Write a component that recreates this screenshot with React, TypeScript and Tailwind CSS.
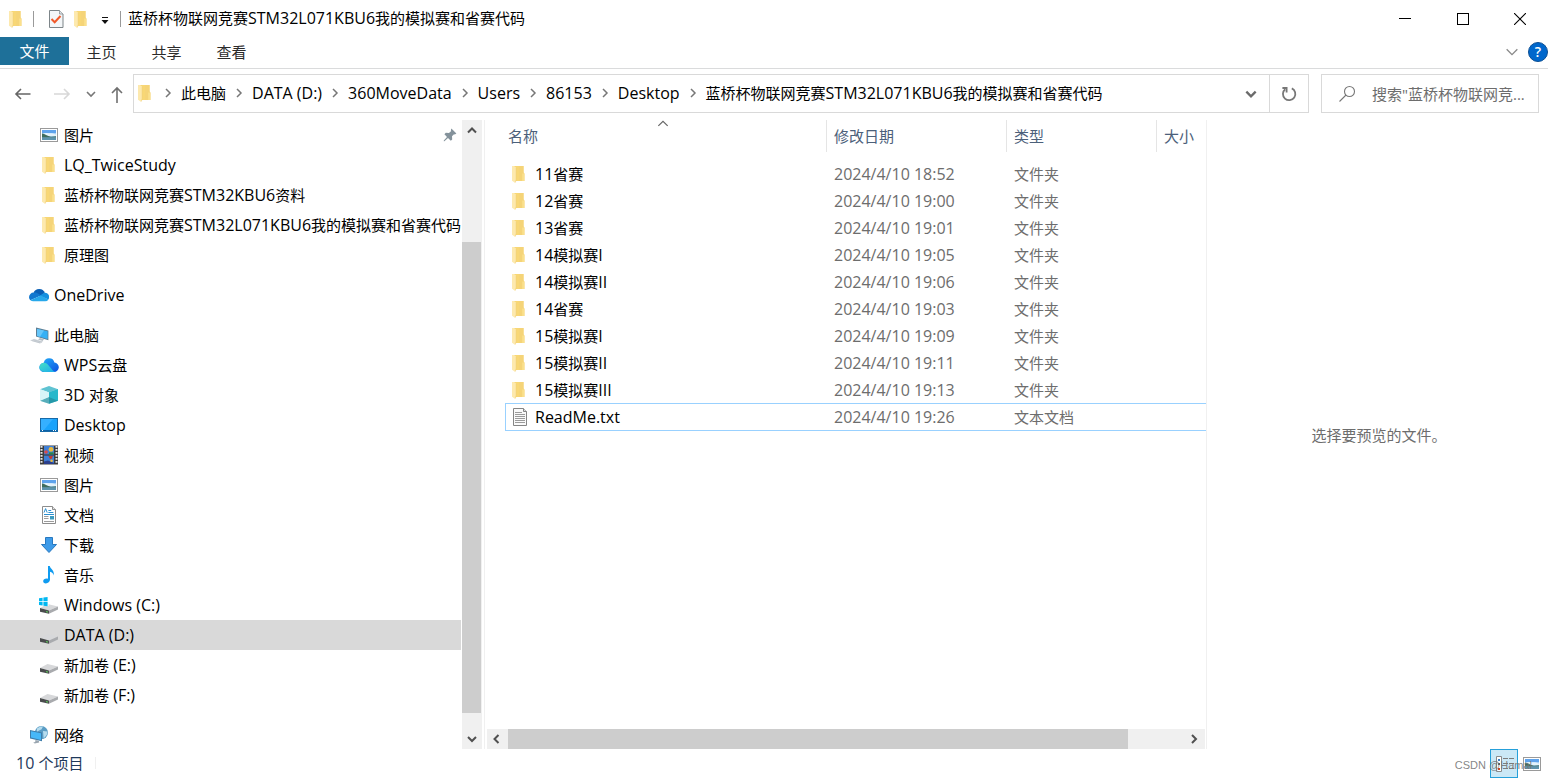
import React, { useState } from 'react';

const FOLDER_NAME = '蓝桥杯物联网竞赛STM32L071KBU6我的模拟赛和省赛代码';

type IconProps = { className?: string };

// Latin runs are set one step larger than the CJK glyphs around them
function Label({ text }: { text: string }) {
  const parts = text.split(/([\x20-\x7e]+)/).filter(Boolean);
  return (
    <span className="whitespace-pre">
      {parts.map((part, i) =>
        /^[\x20-\x7e]/.test(part) ? (
          <span key={i} className="text-[16px]">{part}</span>
        ) : (
          <span key={i}>{part}</span>
        )
      )}
    </span>
  );
}

function FolderIcon({ className = 'w-5 h-5' }: IconProps) {
  return (
    <svg viewBox="0 0 20 20" className={className}>
      <path d="M5 2h9.5v6.5l.8 1V17H5z" fill="#f8d775" />
      <path d="M10 2h4.5v6.5l.8 1V17H10z" fill="#f5d478" />
      <path d="M13.2 9.5h2.1V17h-2.1z" fill="#fbe08c" />
      <path d="M3 2H5l2.2 1.6v12.2L6 18.8 3 16.8z" fill="#fde9ae" />
      <path d="M7.2 3.6v12.2l-1 2.8" fill="none" stroke="#efcb6c" strokeWidth=".6" />
    </svg>
  );
}

function PictureIcon({ className = 'w-5 h-5' }: IconProps) {
  return (
    <svg viewBox="0 0 20 20" className={className}>
      <rect x="1.5" y="3.5" width="17" height="13" fill="#fff" stroke="#9a9a9a" />
      <path d="M3 5h14v10H3z" fill="#a9d3f7" />
      <path d="M3 5h14v3H3z" fill="#5fa3ec" />
      <path d="M5 8.4c3-1.2 5 .4 8-.2l4 1.4V11H3V9z" fill="#e4f2fb" />
      <path d="M3 8.6c3 .4 5 2.6 9 3.2l5-.6v1.6H3z" fill="#3f6d5d" />
      <path d="M3 12.4h14V15H3z" fill="#5d93ad" />
    </svg>
  );
}

function OneDriveIcon() {
  return (
    <svg viewBox="0 0 20 20" className="w-5 h-5">
      <path d="M4.6 7.6A6 6 0 0 1 15.8 8L11 11.5z" fill="#0a5fb5" />
      <path d="M0 12.2A4.7 4.7 0 0 1 4.6 7.6c1.8-.3 3.4.3 4.8 1.2L12 10.6 1.4 15.2A4.6 4.6 0 0 1 0 12.2z" fill="#1177cf" />
      <path d="M11 10.4l4.4-2.6A4.2 4.2 0 0 1 19.4 14.4L11 11z" fill="#1490df" />
      <path d="M1.4 15.2L11.8 10.4l7.6 4a3.6 3.6 0 0 1-3.2 1.9H4.4a4.2 4.2 0 0 1-3-1.1z" fill="#28a8ea" />
    </svg>
  );
}

function ComputerIcon() {
  return (
    <svg viewBox="0 0 20 20" className="w-5 h-5">
      <path d="M7 2.6l12.4 2.8v9.8L7 11.6z" fill="#5d7e94" />
      <path d="M8 4l10.6 2.3v7.6L8 10.9z" fill="#35b0f5" />
      <path d="M8 4l7 1.5-4 6.2-3-.8z" fill="#66c6fa" />
      <path d="M11 13l4 1.2-1.4 1.8L9 14.6z" fill="#b3bcc4" />
      <path d="M1 15.4l4-1.6 9.4 2.8-3.4 2z" fill="#d6dbe0" />
      <path d="M2.6 15.5l8.6 2.4M4.4 14.8l8.6 2.4" stroke="#aab2ba" strokeWidth=".5" />
    </svg>
  );
}

function WpsCloudIcon() {
  return (
    <svg viewBox="0 0 20 20" className="w-5 h-5">
      <defs>
        <linearGradient id="wpsA" x1="0" y1="0" x2="1" y2="1">
          <stop offset="0" stopColor="#45e0c4" />
          <stop offset="1" stopColor="#1ba9ef" />
        </linearGradient>
        <linearGradient id="wpsB" x1="0" y1="0" x2="1" y2="1">
          <stop offset="0" stopColor="#24b2fa" />
          <stop offset="1" stopColor="#0b4fe0" />
        </linearGradient>
      </defs>
      <path d="M5 17a4.6 4.6 0 0 1-.2-9.2 5.4 5.4 0 0 1 10.6-.2A4.7 4.7 0 0 1 14.8 17z" fill="url(#wpsB)" />
      <path d="M5.2 17a4.6 4.6 0 1 1 3.6-7.4L12.6 14c1 1.2 2.2 3 4 2.8a9 9 0 0 1-1.8.2z" fill="url(#wpsA)" />
    </svg>
  );
}

function CubeIcon() {
  return (
    <svg viewBox="0 0 20 20" className="w-5 h-5">
      <path d="M10 1l9 3.2-9 3.2-9-3.2z" fill="#5fc3d2" />
      <path d="M1 4.2l9 3.2v11.4L1 15.8z" fill="#bfeaf0" />
      <path d="M19 4.2l-9 3.2v11.4l9-3z" fill="#19a6ba" />
      <path d="M1 15.8l9-4 9 4-9 3z" fill="#2b93a3" opacity=".7" />
      <path d="M1 4.2l9 3.2V12l-9 3.8z" fill="#d8f4f7" />
      <path d="M19 4.2l-9 3.2V12l9 3.8z" fill="#27b8cb" />
    </svg>
  );
}

function DesktopIcon() {
  return (
    <svg viewBox="0 0 20 20" className="w-5 h-5">
      <rect x="1.5" y="3.5" width="17" height="13" fill="#19a3fb" stroke="#176aa8" />
      <path d="M2 4h12L5 15H2z" fill="#35b0ff" />
      <path d="M2 15h16v1H2z" fill="#0b62a8" />
      <path d="M3 15.5h1M14 15.5h1M16 15.5h1" stroke="#fff" />
    </svg>
  );
}

function VideoIcon() {
  return (
    <svg viewBox="0 0 20 20" className="w-5 h-5">
      <rect x="1" y="0.5" width="18" height="19" fill="#3c3c3c" />
      <path d="M2.5 1v18M17.5 1v18" stroke="#e6e6e6" strokeWidth="2" strokeDasharray="1.8 1.2" />
      <rect x="5" y="1" width="10" height="8.4" fill="#3f7fd6" />
      <rect x="5" y="10.6" width="10" height="8.4" fill="#3f7fd6" />
      <circle cx="12" cy="4.4" r="2.4" fill="#e9b93c" />
      <circle cx="7" cy="7" r="1.8" fill="#d94b4b" />
      <path d="M10 7.4h4.6v2H10z" fill="#2a8a47" />
      <path d="M9.4 11h4.6l-1.6 3h-1.4z" fill="#c63a2f" />
      <path d="M5 16.4l4-1 6 2.6v1H5z" fill="#2b3f8c" />
      <circle cx="12.6" cy="15.8" r="1.3" fill="#e9b93c" />
    </svg>
  );
}

function DocumentIcon() {
  return (
    <svg viewBox="0 0 20 20" className="w-5 h-5">
      <path d="M3.5 1.5h10l3 3v14h-13z" fill="#fff" stroke="#8d8d8d" />
      <path d="M13.5 1.5v3h3" fill="#e3e3e3" stroke="#8d8d8d" />
      <path d="M5 7.6l1.6-4 1.6 4M9.4 5.5h2.8M9.4 7.5h5M5 9.5h10" stroke="#2b8fd0" fill="none" />
      <path d="M5 11.5h4.5M5 13.5h4.5M5 16.5h10" stroke="#9c9c9c" />
      <path d="M11 11h4v3.5h-4z" fill="#3a9abf" />
    </svg>
  );
}

function DownloadIcon() {
  return (
    <svg viewBox="0 0 20 20" className="w-5 h-5">
      <path d="M6.5 2.5h7v7h4L10 17.5 2.5 9.5h4z" fill="#3e9be9" stroke="#2878bf" />
    </svg>
  );
}

function MusicIcon() {
  return (
    <svg viewBox="0 0 20 20" className="w-5 h-5">
      <path d="M9 1h1.8c.4 3 4.8 4 4 9.4-.6-2-1.8-3.2-3.8-3.6v7.8c0 2.4-2 3.8-4.2 3.8-1.6 0-2.6-.8-2.6-2.2 0-2 2.4-3.2 4.8-2.4z" fill="#0f9bf0" />
    </svg>
  );
}

function DriveIcon({ windows = false }: { windows?: boolean }) {
  return (
    <svg viewBox="0 0 20 20" className="w-5 h-5">
      <path d="M1 13l7.5-4L19 11.6 10 15.6z" fill="#d7d8da" />
      <path d="M1 13l9 2.4v3.4l-9-2z" fill="#4a4c4d" />
      <path d="M10 15.4l9-3.8v2.8l-9 4.4z" fill="#a9abae" />
      <path d="M7 16.6l2 .5" stroke="#5fd35a" />
      {windows && (
        <>
          <path d="M0 2h9.5v9H0z" fill="#fff" />
          <path d="M0 3.2l3.6-.5v3.6H0zM4.4 2.6L8.6 2v4.3H4.4zM0 7.1h3.6v3.5L0 10.1zM4.4 7.1h4.2v4.1l-4.2-.5z" fill="#00b7f1" />
        </>
      )}
    </svg>
  );
}

function NetworkIcon() {
  return (
    <svg viewBox="0 0 20 20" className="w-5 h-5">
      <circle cx="12.4" cy="7.6" r="6.6" fill="#5a9cc4" />
      <path d="M8 3.6c2-2 4.6-2.4 6-2l-1.4 2.6-3 1.6-2 2zM14 6l4.4.6c.4 2.8-1.8 5.6-3.8 6.6z" fill="#b6dcee" />
      <path d="M1 5l12 2.4v8.8L1 13.4z" fill="#3e7daa" />
      <path d="M2 6.2l10 2v6.8L2 12.6z" fill="#46b8f8" />
      <path d="M6.4 15l3.4.8.4 1.6-4.4 1-1.6-.8 2-.6z" fill="#9aa6b0" />
    </svg>
  );
}

function TextFileIcon() {
  return (
    <svg viewBox="0 0 20 20" className="w-5 h-5">
      <path d="M3.5 1.5h10l3 3v14h-13z" fill="#fafafa" stroke="#858585" />
      <path d="M13.5 1.5v3h3" fill="#ddd" stroke="#858585" />
      <path d="M5 5.5h7M5 7.5h10M5 9.5h10M5 11.5h10M5 13.5h10M5 15.5h10" stroke="#9b9b9b" />
    </svg>
  );
}

function CheckPageIcon() {
  return (
    <svg viewBox="0 0 20 20" className="w-5 h-5">
      <path d="M3.5 1.5h10l3.5 3.5v13.5H3.5z" fill="#f3f6f8" stroke="#7d8589" />
      <path d="M13.5 1.5V5H17" fill="#dfe3e6" stroke="#7d8589" strokeWidth=".7" />
      <path d="M5.5 10l3.2 3.2 5.8-6.2" fill="none" stroke="#f0592a" strokeWidth="2" />
    </svg>
  );
}

function PinIcon() {
  return (
    <svg viewBox="0 0 14 14" className="w-[14px] h-[14px]">
      <path d="M8.4.6l5 5-1.6.8-.8-.2-2 2 .2 3.2-1.4 1.4L5 10 1.4 13.2H.8v-.6L4 9 1.4 6.2 2.8 4.8l3.2.2 2.2-2-.4-.8z" fill="#84929b" />
    </svg>
  );
}

type Dir = 'up' | 'down' | 'left' | 'right';
const CHEVRONS: Record<Dir, string> = {
  up: 'M2 8.5L6 4.5l4 4',
  down: 'M2 4L6 8l4-4',
  left: 'M8.5 2L4.5 6l4 4',
  right: 'M4 2l4 4-4 4',
};

function Chevron({ dir, width = 1.5, className = 'w-3 h-3' }: { dir: Dir; width?: number; className?: string }) {
  return (
    <svg viewBox="0 0 12 12" className={className} fill="none" stroke="currentColor" strokeWidth={width}>
      <path d={CHEVRONS[dir]} />
    </svg>
  );
}

function Arrow({ d }: { d: string }) {
  return (
    <svg viewBox="0 0 18 18" className="w-[18px] h-[18px]" fill="none" stroke="currentColor" strokeWidth="1.6">
      <path d={d} />
    </svg>
  );
}

interface TreeItem {
  label: string;
  icon: React.ReactNode;
  pinned?: boolean;
}

interface TreeGroup {
  root?: TreeItem;
  items: TreeItem[];
}

const TREE: TreeGroup[] = [
  {
    items: [
      { label: '图片', icon: <PictureIcon />, pinned: true },
      { label: 'LQ_TwiceStudy', icon: <FolderIcon /> },
      { label: '蓝桥杯物联网竞赛STM32KBU6资料', icon: <FolderIcon /> },
      { label: FOLDER_NAME, icon: <FolderIcon /> },
      { label: '原理图', icon: <FolderIcon /> },
    ],
  },
  { root: { label: 'OneDrive', icon: <OneDriveIcon /> }, items: [] },
  {
    root: { label: '此电脑', icon: <ComputerIcon /> },
    items: [
      { label: 'WPS云盘', icon: <WpsCloudIcon /> },
      { label: '3D 对象', icon: <CubeIcon /> },
      { label: 'Desktop', icon: <DesktopIcon /> },
      { label: '视频', icon: <VideoIcon /> },
      { label: '图片', icon: <PictureIcon /> },
      { label: '文档', icon: <DocumentIcon /> },
      { label: '下载', icon: <DownloadIcon /> },
      { label: '音乐', icon: <MusicIcon /> },
      { label: 'Windows (C:)', icon: <DriveIcon windows /> },
      { label: 'DATA (D:)', icon: <DriveIcon /> },
      { label: '新加卷 (E:)', icon: <DriveIcon /> },
      { label: '新加卷 (F:)', icon: <DriveIcon /> },
    ],
  },
  { root: { label: '网络', icon: <NetworkIcon /> }, items: [] },
];

const FILES = [
  { name: '11省赛', date: '2024/4/10 18:52', type: '文件夹' },
  { name: '12省赛', date: '2024/4/10 19:00', type: '文件夹' },
  { name: '13省赛', date: '2024/4/10 19:01', type: '文件夹' },
  { name: '14模拟赛I', date: '2024/4/10 19:05', type: '文件夹' },
  { name: '14模拟赛II', date: '2024/4/10 19:06', type: '文件夹' },
  { name: '14省赛', date: '2024/4/10 19:03', type: '文件夹' },
  { name: '15模拟赛I', date: '2024/4/10 19:09', type: '文件夹' },
  { name: '15模拟赛II', date: '2024/4/10 19:11', type: '文件夹' },
  { name: '15模拟赛III', date: '2024/4/10 19:13', type: '文件夹' },
  { name: 'ReadMe.txt', date: '2024/4/10 19:26', type: '文本文档' },
];

const CRUMBS = ['此电脑', 'DATA (D:)', '360MoveData', 'Users', '86153', 'Desktop', FOLDER_NAME];

function TitleBar() {
  return (
    <header className="flex h-[37px] items-center">
      <FolderIcon className="ml-[6px] w-5 h-5 shrink-0" />
      <span className="ml-[7px] h-4 w-px bg-[#9a9a9a]" />
      <button aria-label="属性" className="ml-3"><CheckPageIcon /></button>
      <button aria-label="新建文件夹" className="ml-[5px]"><FolderIcon /></button>
      <button aria-label="自定义快速访问工具栏" className="ml-1 flex w-5 justify-center">
        <svg viewBox="0 0 8 8" className="mt-1 w-2 h-2">
          <path d="M1 .5h6" stroke="#111" />
          <path d="M.5 3h7L4 7z" fill="#111" />
        </svg>
      </button>
      <span className="ml-[5px] h-4 w-px bg-[#9a9a9a]" />
      <h1 className="ml-[7px] pb-[2px]"><Label text={FOLDER_NAME} /></h1>
      <div className="ml-auto flex text-black">
        <button aria-label="最小化" className="flex h-9 w-[58px] items-center justify-center">
          <span className="h-px w-3 bg-black" />
        </button>
        <button aria-label="最大化" className="flex h-9 w-[58px] items-center justify-center">
          <span className="h-3 w-3 border border-black" />
        </button>
        <button aria-label="关闭" className="flex h-9 w-14 items-center justify-center">
          <svg viewBox="0 0 12 12" className="w-3 h-3" stroke="#000" strokeWidth="1.1">
            <path d="M0 0l12 12M12 0L0 12" />
          </svg>
        </button>
      </div>
    </header>
  );
}

function RibbonTabs() {
  return (
    <nav className="flex h-8 items-start border-b border-[#dadbdc]">
      <button className="h-7 w-[69px] bg-[#1e7099] text-white">文件</button>
      {['主页', '共享', '查看'].map((tab) => (
        <button key={tab} className="h-[30px] w-[65px] text-[#2b2b2b]">{tab}</button>
      ))}
      <div className="ml-auto flex h-[30px] items-center gap-2">
        <button aria-label="展开功能区" className="text-[#8a8a8a]">
          <Chevron dir="down" width={1} className="w-4 h-4" />
        </button>
        <button aria-label="帮助" className="flex h-5 w-5 items-center justify-center rounded-full border border-[#0c4f93] bg-[#0067cc] text-sm font-semibold text-white">?</button>
      </div>
    </nav>
  );
}

function AddressBar() {
  return (
    <div className="flex items-center pt-[5px] pb-[7px] pr-[9px]">
      <button aria-label="返回" className="ml-[14px] text-[#666]"><Arrow d="M16.5 9H2M7 4L2 9l5 5" /></button>
      <button aria-label="前进" className="ml-[21px] text-[#d8d8d8]"><Arrow d="M1 9h15M11 4l5 5-5 5" /></button>
      <button aria-label="最近的位置" className="ml-[14px] text-[#777]"><Chevron dir="down" width={1.6} /></button>
      <button aria-label="上移" className="ml-[11px] pt-[2px] text-[#707070]"><Arrow d="M9 17V2M4 7l5-5 5 5" /></button>
      <div className="ml-[7px] flex h-[39px] flex-1 items-stretch border border-[#d9d9d9]">
        <div className="flex min-w-0 flex-1 items-center overflow-hidden pb-[2px]">
          <FolderIcon className="ml-px w-5 h-5 shrink-0" />
          {CRUMBS.map((crumb) => (
            <React.Fragment key={crumb}>
              <span className="flex w-[26px] shrink-0 justify-center text-[#777]">
                <Chevron dir="right" />
              </span>
              <button className="shrink-0"><Label text={crumb} /></button>
            </React.Fragment>
          ))}
        </div>
        <button aria-label="以前的位置" className="flex w-9 items-center justify-center text-[#6a6a6a]">
          <Chevron dir="down" width={2} className="w-[14px] h-[14px]" />
        </button>
        <button aria-label="刷新" className="flex w-[39px] items-center justify-center border-l border-[#d9d9d9]">
          <svg viewBox="0 0 16 16" className="w-4 h-4" fill="none" stroke="#777" strokeWidth="1.8">
            <path d="M10.8 2.4a6.2 6.2 0 1 1-6.6.8" />
            <path d="M1.4 2h4.2v4.4" />
          </svg>
        </button>
      </div>
      <label className="ml-3 flex h-[39px] w-[218px] items-center border border-[#d9d9d9] pl-4">
        <svg viewBox="0 0 18 18" className="w-[18px] h-[18px] shrink-0" fill="none" stroke="#777" strokeWidth="1.1">
          <circle cx="11.5" cy="6.5" r="5" />
          <path d="M8 10l-6.5 6.5" />
        </svg>
        <input
          type="search"
          aria-label="搜索"
          placeholder={'搜索"蓝桥杯物联网竞...'}
          className="ml-4 min-w-0 flex-1 bg-transparent outline-none placeholder:text-[#6d6d6d]"
        />
      </label>
    </div>
  );
}

function TreeRow({ item, nested, selected, onSelect }: {
  item: TreeItem;
  nested: boolean;
  selected: boolean;
  onSelect: () => void;
}) {
  return (
    <button
      onClick={onSelect}
      className={`flex h-[30px] w-full items-center gap-[5px] overflow-hidden pr-1 text-left ${nested ? 'pl-[39px]' : 'pl-[29px]'} ${selected ? 'bg-[#d9d9d9]' : ''}`}
    >
      <span className="shrink-0">{item.icon}</span>
      <Label text={item.label} />
      {item.pinned && <span className="ml-auto"><PinIcon /></span>}
    </button>
  );
}

function Sidebar() {
  const [selected, setSelected] = useState('DATA (D:)');
  return (
    <aside className="flex w-[485px] shrink-0 border-r border-[#f0f0f0]">
      <div className="-mb-px flex w-[461px] flex-col gap-[10px]">
        {TREE.map((group, i) => (
          <div key={i}>
            {[group.root, ...group.items].map((item, j) =>
              item ? (
                <TreeRow
                  key={j}
                  item={item}
                  nested={item !== group.root}
                  selected={item.label === selected}
                  onSelect={() => setSelected(item.label)}
                />
              ) : null
            )}
          </div>
        ))}
      </div>
      <div className="ml-px flex w-5 flex-col items-center bg-[#f0f0f0] text-[#505050]">
        <button aria-label="向上滚动" className="flex h-5 items-center"><Chevron dir="up" width={2} /></button>
        <div className="mt-[102px] mr-px w-[19px] flex-1 bg-[#cdcdcd]" />
        <button aria-label="向下滚动" className="mt-4 flex h-5 items-center"><Chevron dir="down" width={2} /></button>
      </div>
    </aside>
  );
}

function FileList() {
  return (
    <section className="flex min-w-0 flex-1 flex-col border-r border-[#f0f0f0]">
      <div className="flex-1 pl-5">
        <table className="w-full table-fixed border-separate border-spacing-0 text-left">
          <colgroup>
            <col />
            <col className="w-[180px]" />
            <col className="w-[150px]" />
            <col className="w-[50px]" />
          </colgroup>
          <thead>
            <tr className="h-10 align-top text-[#4c607a]">
              <th scope="col" className="p-0 font-normal">
                <div className="relative flex h-8 items-center pl-[3px]">
                  名称
                  <Chevron dir="up" width={1} className="absolute left-[151px] -top-1 w-[14px] h-[14px] text-[#666]" />
                </div>
              </th>
              {['修改日期', '类型', '大小'].map((head) => (
                <th key={head} scope="col" className="p-0 font-normal">
                  <div className="flex h-8 items-center border-l border-[#e5e5e5] pl-[7px]">{head}</div>
                </th>
              ))}
            </tr>
          </thead>
          <tbody className="text-[#6d6d6d]">
            {FILES.map((file) => {
              const isText = file.name.endsWith('.txt');
              const edge = isText ? 'border-y border-[#99d1ff]' : '';
              return (
                <tr key={file.name} className={isText ? 'h-7' : 'h-[27px]'}>
                  <td className={`p-0 ${edge} ${isText ? 'border-l' : ''}`}>
                    <div className={`flex items-center text-black ${isText ? 'gap-[5px] pl-1' : 'gap-[6px] pl-1'}`}>
                      {isText ? <TextFileIcon /> : <FolderIcon />}
                      <Label text={file.name} />
                    </div>
                  </td>
                  <td className={`py-0 pr-0 pl-2 ${edge}`}><Label text={file.date} /></td>
                  <td className={`py-0 pr-0 pl-2 ${edge}`}>{file.type}</td>
                  <td className={`p-0 ${edge}`} />
                </tr>
              );
            })}
          </tbody>
        </table>
      </div>
      <div className="mr-px ml-[2px] flex h-5 items-center bg-[#f0f0f0] text-[#505050]">
        <button aria-label="向左滚动" className="flex w-[21px] justify-center pr-[3px]"><Chevron dir="left" width={2} /></button>
        <div className="h-full flex-1 bg-[#cdcdcd]" />
        <button aria-label="向右滚动" className="ml-[56px] flex w-[21px] justify-center pr-[2px]"><Chevron dir="right" width={2} /></button>
      </div>
    </section>
  );
}

function StatusBar() {
  return (
    <footer className="relative flex h-[30px] items-start pr-[6px] pl-4 text-[#1e395b]">
      <div className="flex h-7 items-center">
        <Label text="10 个项目" />
        <span className="ml-3 h-3 w-px bg-[#f0f0f0]" />
      </div>
      <div className="ml-auto flex h-[29px] items-center gap-1">
        <button aria-label="详细信息" className="flex h-[29px] w-7 items-center justify-center border border-[#26a0da] bg-[#cbe8f6]">
          <svg viewBox="0 0 20 18" className="w-5 h-[18px]">
            <path d="M2.5 1.5h5v15h-5z" fill="#fff" stroke="#8a8a8a" />
            <path d="M4 4h2v2H4z" fill="#3b7fc4" />
            <path d="M4 8h2v2H4z" fill="#555" />
            <path d="M4 13h2v2H4z" fill="#d2451e" />
            <path d="M9 3.5h5M15 3.5h5M9 8.5h5M15 8.5h5M9 13.5h5M15 13.5h5" stroke="#7d7d7d" />
          </svg>
        </button>
        <button aria-label="大缩略图"><PictureIcon /></button>
      </div>
      <span className="pointer-events-none absolute right-4 bottom-[7px] font-['Liberation_Sans',sans-serif] text-[11px] leading-[14px] text-[#777]/90">
        CSDN @Hamal
      </span>
    </footer>
  );
}

export default function App() {
  return (
    <div className="flex min-h-screen flex-col bg-white font-['Open_Sans','Noto_Sans_CJK_SC',sans-serif] text-[15px] leading-5 text-black">
      <TitleBar />
      <RibbonTabs />
      <AddressBar />
      <main className="flex flex-1">
        <Sidebar />
        <FileList />
        <section className="flex w-[341px] shrink-0 items-center justify-center pl-[3px] text-[#6d6d6d]">
          选择要预览的文件。
        </section>
      </main>
      <StatusBar />
    </div>
  );
}
